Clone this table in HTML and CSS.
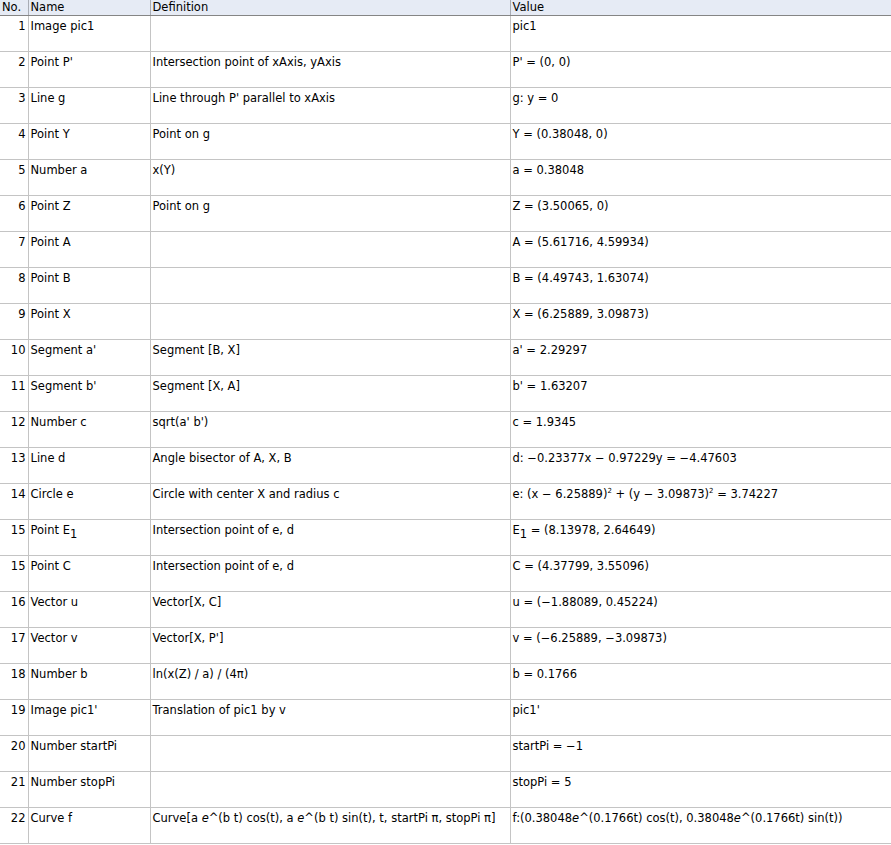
FILE: index.html
```html
<!DOCTYPE html>
<html>
<head>
<meta charset="utf-8">
<link rel="stylesheet" href="styles.css">
</head>
<body>
<table class="grid">
<colgroup><col class="c-no"><col class="c-name"><col class="c-def"><col class="c-val"></colgroup>
<thead>
<tr><th class="no">No.</th><th>Name</th><th>Definition</th><th>Value</th></tr>
</thead>
<tbody>
<tr><td class="no">1</td><td>Image pic1</td><td></td><td>pic1</td></tr>
<tr><td class="no">2</td><td>Point P'</td><td>Intersection point of xAxis, yAxis</td><td>P' = (0, 0)</td></tr>
<tr><td class="no">3</td><td>Line g</td><td>Line through P' parallel to xAxis</td><td>g: y = 0</td></tr>
<tr><td class="no">4</td><td>Point Y</td><td>Point on g</td><td>Y = (0.38048, 0)</td></tr>
<tr><td class="no">5</td><td>Number a</td><td>x(Y)</td><td>a = 0.38048</td></tr>
<tr><td class="no">6</td><td>Point Z</td><td>Point on g</td><td>Z = (3.50065, 0)</td></tr>
<tr><td class="no">7</td><td>Point A</td><td></td><td>A = (5.61716, 4.59934)</td></tr>
<tr><td class="no">8</td><td>Point B</td><td></td><td>B = (4.49743, 1.63074)</td></tr>
<tr><td class="no">9</td><td>Point X</td><td></td><td>X = (6.25889, 3.09873)</td></tr>
<tr><td class="no">10</td><td>Segment a'</td><td>Segment [B, X]</td><td>a' = 2.29297</td></tr>
<tr><td class="no">11</td><td>Segment b'</td><td>Segment [X, A]</td><td>b' = 1.63207</td></tr>
<tr><td class="no">12</td><td>Number c</td><td>sqrt(a' b')</td><td>c = 1.9345</td></tr>
<tr><td class="no">13</td><td>Line d</td><td>Angle bisector of A, X, B</td><td>d: −0.23377x − 0.97229y = −4.47603</td></tr>
<tr><td class="no">14</td><td>Circle e</td><td>Circle with center X and radius c</td><td>e: (x − 6.25889)<sup>2</sup> + (y − 3.09873)<sup>2</sup> = 3.74227</td></tr>
<tr><td class="no">15</td><td>Point E<sub>1</sub></td><td>Intersection point of e, d</td><td>E<sub>1</sub> = (8.13978, 2.64649)</td></tr>
<tr><td class="no">15</td><td>Point C</td><td>Intersection point of e, d</td><td>C = (4.37799, 3.55096)</td></tr>
<tr><td class="no">16</td><td>Vector u</td><td>Vector[X, C]</td><td>u = (−1.88089, 0.45224)</td></tr>
<tr><td class="no">17</td><td>Vector v</td><td>Vector[X, P']</td><td>v = (−6.25889, −3.09873)</td></tr>
<tr><td class="no">18</td><td>Number b</td><td>ln(x(Z) / a) / (4π)</td><td>b = 0.1766</td></tr>
<tr><td class="no">19</td><td>Image pic1'</td><td>Translation of pic1 by v</td><td>pic1'</td></tr>
<tr><td class="no">20</td><td>Number startPi</td><td></td><td>startPi = −1</td></tr>
<tr><td class="no">21</td><td>Number stopPi</td><td></td><td>stopPi = 5</td></tr>
<tr><td class="no">22</td><td>Curve f</td><td>Curve[a <i>e</i>^(b t) cos(t), a <i>e</i>^(b t) sin(t), t, startPi π, stopPi π]</td><td>f:(0.38048<i>e</i>^(0.1766t) cos(t), 0.38048<i>e</i>^(0.1766t) sin(t))</td></tr>
</tbody>
</table>
</body>
</html>
```
FILE: styles.css
```css
html, body {
  margin: 0;
  padding: 0;
  background: #ffffff;
}
.grid {
  border-collapse: collapse;
  table-layout: fixed;
  width: 891px;
  font-family: "DejaVu Sans", sans-serif;
  font-size: 11.5px;
  color: #000;
}
.c-no { width: 28px; }
.c-name { width: 122px; }
.c-def { width: 360px; }
.c-val { width: 381px; }
.grid th {
  background: #e6ebf5;
  font-weight: normal;
  text-align: left;
  height: 15px;
  box-sizing: border-box;
  padding: 0 0 0 2px;
  border-right: 1px solid #a8acb4;
  border-bottom: 1px solid #858585;
  line-height: 14px;
  vertical-align: middle;
  white-space: nowrap;
  overflow: hidden;
}
.grid th:last-child { border-right: none; }
.grid td {
  height: 36px;
  padding: 3px 0 0 2px;
  box-sizing: border-box;
  vertical-align: top;
  line-height: 14px;
  border-right: 1px solid #c4c4c4;
  border-bottom: 1px solid #c4c4c4;
  white-space: nowrap;
  overflow: hidden;
}
.grid td:last-child { border-right: none; }
.grid td.no {
  text-align: right;
  padding: 3px 2px 0 0;
}
.grid th.no { padding-left: 2px; }
.grid sup {
  font-size: 7px;
  vertical-align: 5px;
  line-height: 0;
}
.grid sub {
  font-size: 11.5px;
  vertical-align: -4px;
  line-height: 0;
}
.grid i { font-style: italic; }
```
